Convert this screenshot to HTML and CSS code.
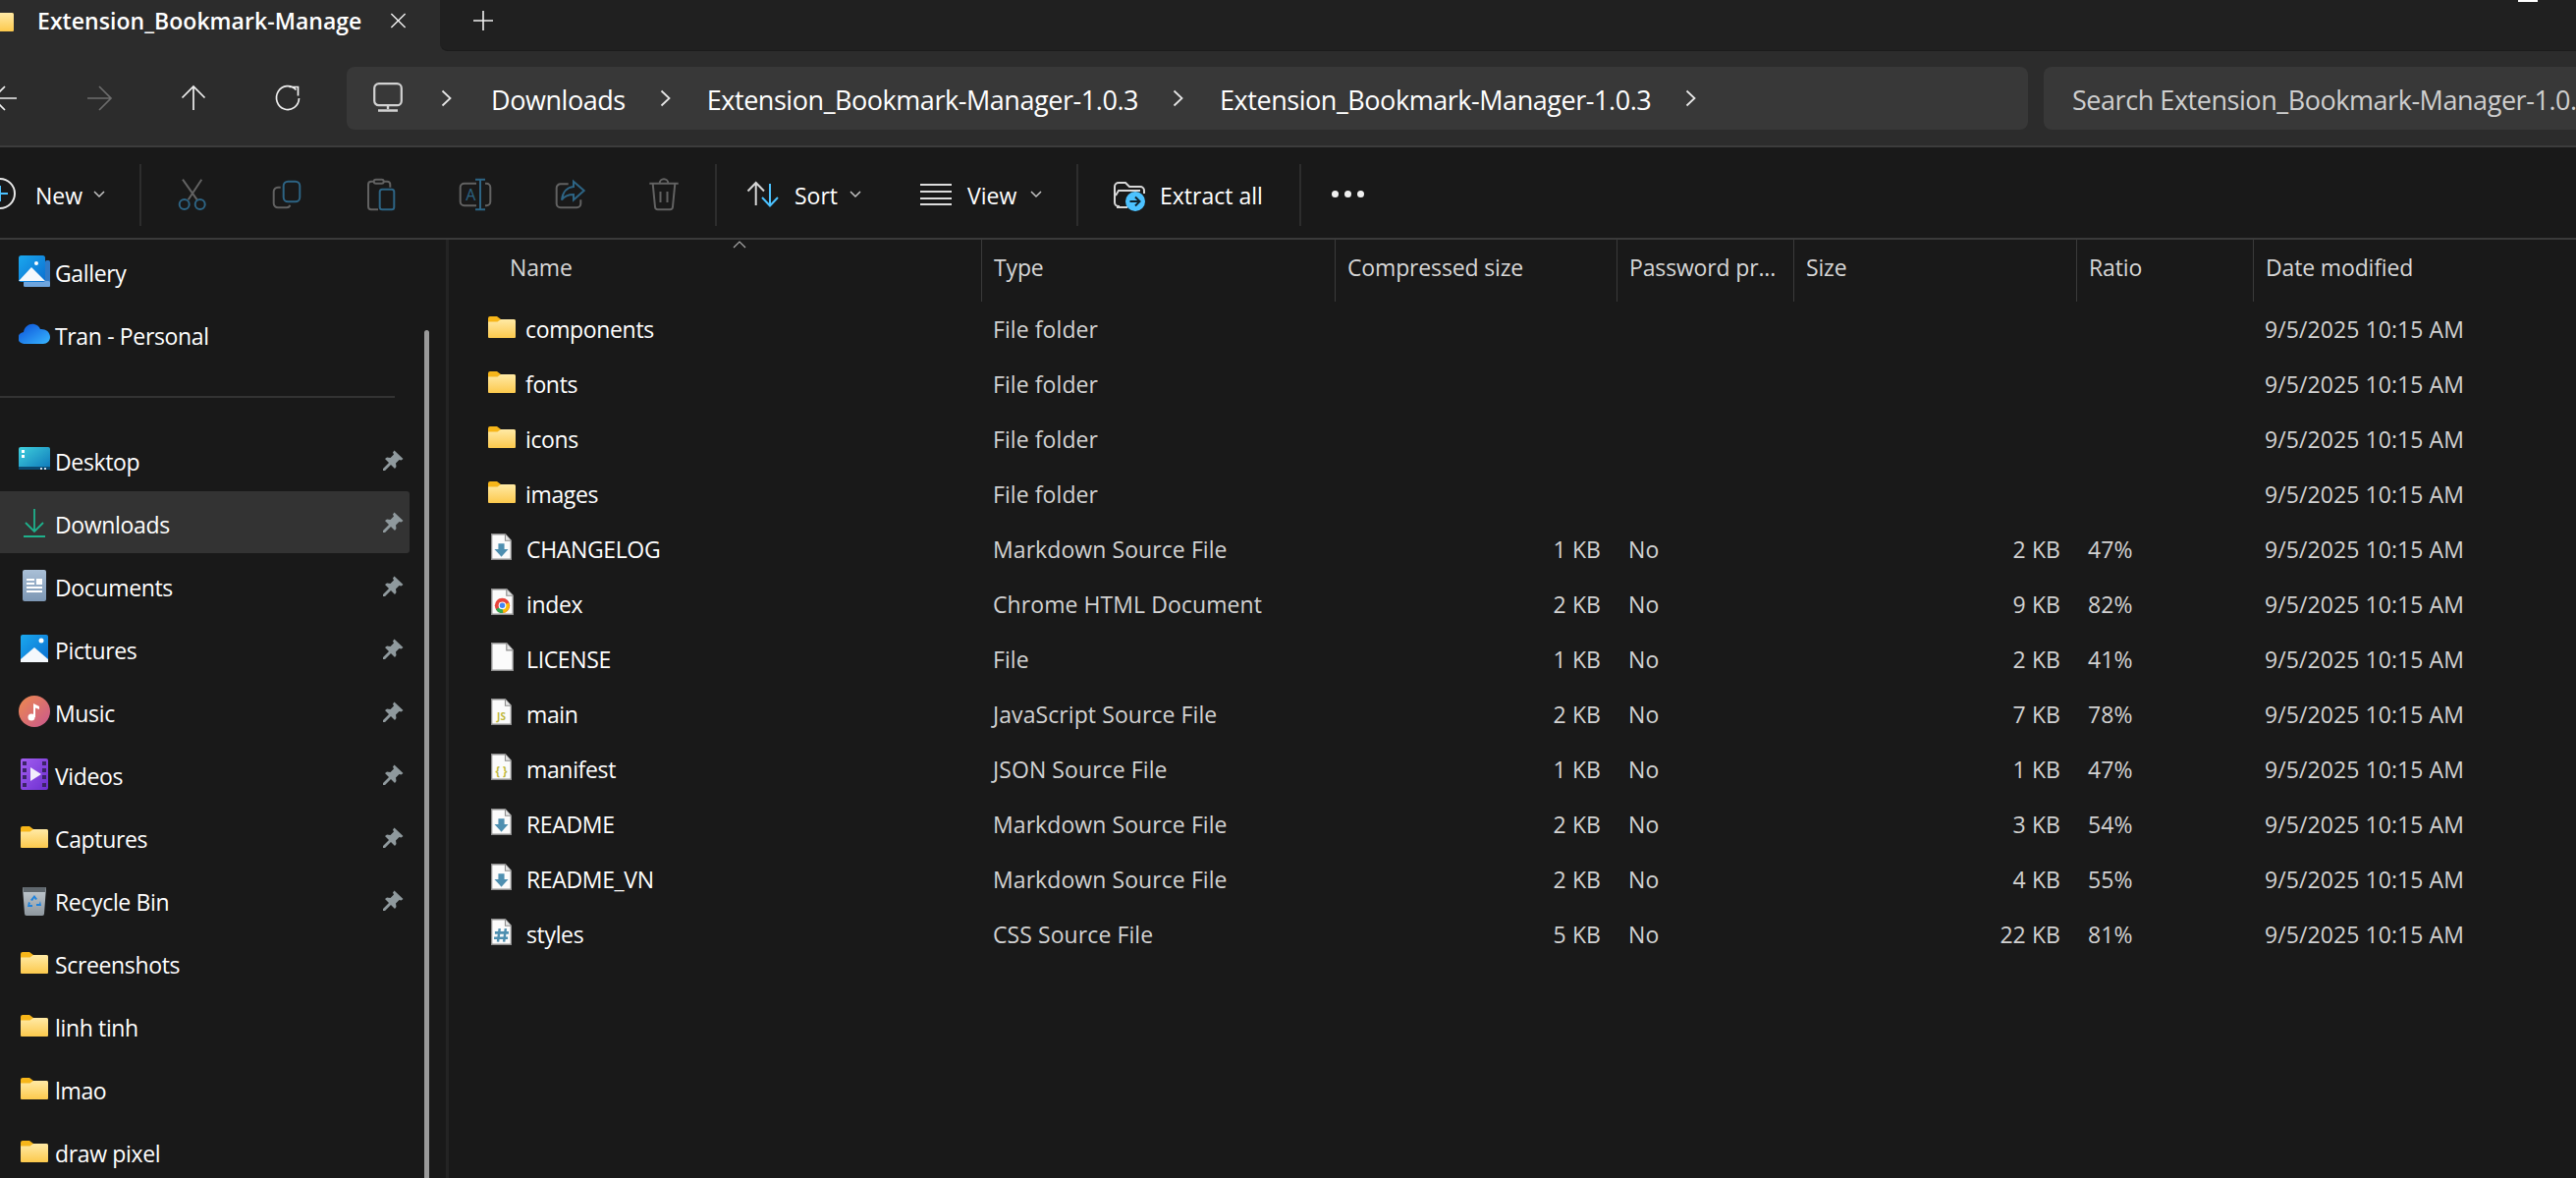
FILE: index.html
```html
<!DOCTYPE html>
<html lang="en">
<head>
<meta charset="utf-8">
<title>Extension_Bookmark-Manager-1.0.3</title>
<link rel="stylesheet" href="styles.css">
</head>
<body>
<svg class="defs" width="0" height="0" aria-hidden="true">
  <defs>
    <linearGradient id="fg" x1="0" y1="0" x2="0" y2="1"><stop offset="0" stop-color="#ffeaa6"/><stop offset="1" stop-color="#fcc94c"/></linearGradient>
    <linearGradient id="bl" x1="0" y1="0" x2="1" y2="1"><stop offset="0" stop-color="#1aa7ee"/><stop offset="1" stop-color="#0b6fd0"/></linearGradient>
    <linearGradient id="dt" x1="0" y1="0" x2="1" y2="1"><stop offset="0" stop-color="#3fd0dc"/><stop offset="1" stop-color="#0d76ba"/></linearGradient>
    <linearGradient id="dc" x1="0" y1="0" x2="0" y2="1"><stop offset="0" stop-color="#a9bfd6"/><stop offset="1" stop-color="#7d97b4"/></linearGradient>
    <linearGradient id="mu" x1="0" y1="0" x2="1" y2="1"><stop offset="0" stop-color="#ee8a4e"/><stop offset="1" stop-color="#c9588e"/></linearGradient>
    <linearGradient id="vd" x1="0" y1="0" x2="1" y2="1"><stop offset="0" stop-color="#a25ef0"/><stop offset="1" stop-color="#6d2fd0"/></linearGradient>
    <linearGradient id="cl" x1="0" y1="0" x2="1" y2="1"><stop offset="0" stop-color="#0a4fd8"/><stop offset="1" stop-color="#38b6ff"/></linearGradient>
    <linearGradient id="bn" x1="0" y1="0" x2="0" y2="1"><stop offset="0" stop-color="#c4ccd2"/><stop offset="1" stop-color="#8e979e"/></linearGradient>
    <symbol id="folder" viewBox="0 0 28 22">
      <path d="M0 2a2 2 0 0 1 2-2h7l4 3h13a2 2 0 0 1 2 2v6H0z" fill="#f7b619"/>
      <path d="M0 5.500h9.500L13 3h13a2 2 0 0 1 2 2v16a1 1 0 0 1-1 1H1a1 1 0 0 1-1-1z" fill="url(#fg)"/>
    </symbol>
    <symbol id="pin" viewBox="0 0 22 22">
      <path d="M12.500 0.500L21.500 9l-2 1.500-2-.5-3.500 3.500.5 3.500-1.500 2-4-4L3 21H1v-2l6-6-4-4 2-1.500 3.500.5L12 4.500 11 2.500z" fill="#8f999d"/>
    </symbol>
    <symbol id="doc" viewBox="0 0 24 28" preserveAspectRatio="none">
      <path d="M.75.75H16.500L23.250 7.500V27.250H.75z" fill="#fbfbfb" stroke="#8d8d8d" stroke-width="1.500"/>
      <path d="M16.500.75V7.500H23.250" fill="#e4e4e4" stroke="#8d8d8d" stroke-width="1.200"/>
    </symbol>
    <symbol id="md" viewBox="0 0 24 28" preserveAspectRatio="none">
      <use href="#doc" width="24" height="28"/>
      <path d="M8.500 10.500h7v6h4.500l-8 8-8-8h4.500z" fill="#4e8fb0"/>
    </symbol>
    <symbol id="chevron" viewBox="0 0 12 24">
      <path d="M1.500 4.500l8 7.500-8 7.500" fill="none" stroke="#e6e6e6" stroke-width="1.800"/>
    </symbol>
    <symbol id="caret" viewBox="0 0 12 8">
      <path d="M1 1l5 5 5-5" fill="none" stroke="#c4c4c4" stroke-width="1.500"/>
    </symbol>
  </defs>
</svg>

<header class="tabbar">
  <div class="tab">
    <svg class="tab-folder"><use href="#folder"/></svg>
    <span class="tab-title">Extension_Bookmark-Manage</span>
    <svg class="tab-close" viewBox="0 0 18 18"><path d="M1 1l16 16M17 1L1 17" stroke="#f0f0f0" stroke-width="1.600"/></svg>
  </div>
  <div class="tabrest">
    <svg class="tab-plus" viewBox="0 0 20 20"><path d="M10 0v20M0 10h20" stroke="#f0f0f0" stroke-width="1.600"/></svg>
    <i class="corner-mark"></i>
  </div>
</header>

<nav class="navbar">
  <svg class="nav-ic nav-back" viewBox="0 0 40 40"><path d="M32 20H8M20 8L8 20l12 12" fill="none" stroke="#f0f0f0" stroke-width="1.700"/></svg>
  <svg class="nav-ic" viewBox="0 0 40 40"><path d="M8 20h24M20 8l12 12-12 12" fill="none" stroke="#6c6c6c" stroke-width="1.700"/></svg>
  <svg class="nav-ic" viewBox="0 0 40 40"><path d="M20 32V8M8.500 19.500L20 8l11.500 11.500" fill="none" stroke="#f0f0f0" stroke-width="1.700"/></svg>
  <svg class="nav-ic nav-refresh" viewBox="0 0 40 40"><path d="M28.500 11.500A11.500 12 0 1 0 31.500 20M21.500 8.500h9v9" fill="none" stroke="#f0f0f0" stroke-width="1.700"/></svg>
  <div class="address">
    <svg class="monitor" viewBox="0 0 30 30"><rect x="1.200" y="1.200" width="27.600" height="22" rx="4.500" fill="none" stroke="#d2d2d2" stroke-width="2.200"/><path d="M15 24v3M5 28.500h20" stroke="#d2d2d2" stroke-width="2.400"/></svg>
    <svg class="crumb-chev"><use href="#chevron"/></svg>
    <span class="crumb crumb-first">Downloads</span>
    <svg class="crumb-chev"><use href="#chevron"/></svg>
    <span class="crumb">Extension_Bookmark-Manager-1.0.3</span>
    <svg class="crumb-chev"><use href="#chevron"/></svg>
    <span class="crumb">Extension_Bookmark-Manager-1.0.3</span>
    <svg class="crumb-chev"><use href="#chevron"/></svg>
  </div>
  <div class="search"><span class="search-text">Search Extension_Bookmark-Manager-1.0.3</span></div>
</nav>

<section class="toolbar">
  <svg class="tb-new" viewBox="0 0 32 32"><circle cx="16" cy="16" r="15" fill="none" stroke="#e8e8e8" stroke-width="2"/><path d="M16 8v16M8 16h16" stroke="#4cc2ff" stroke-width="2"/></svg>
  <span class="tb-label tb-new-label">New</span>
  <svg class="tb-caret tb-new-caret"><use href="#caret"/></svg>
  <i class="tb-div tb-div-a"></i>
  <button class="tb-btn" aria-label="Cut"><svg viewBox="0 0 48 48" class="tb-ic"><path d="M14 9.700L28.700 30.300M33.300 9.700L19.700 30.300" fill="none" stroke="#626262" stroke-width="2"/><circle cx="15.700" cy="35" r="5" fill="none" stroke="#2d6484" stroke-width="2"/><circle cx="31.700" cy="35" r="5" fill="none" stroke="#2d6484" stroke-width="2"/></svg></button>
  <button class="tb-btn" aria-label="Copy"><svg viewBox="0 0 48 48" class="tb-ic"><path d="M17.700 17.700H15a4.300 4.300 0 0 0-4.300 4.300V34a4.300 4.300 0 0 0 4.300 4.300h9a3.500 3.500 0 0 0 3.300-2.500" fill="none" stroke="#626262" stroke-width="2"/><rect x="20.700" y="11.700" width="16.600" height="20.600" rx="4.500" fill="none" stroke="#2d6484" stroke-width="2"/></svg></button>
  <button class="tb-btn" aria-label="Paste"><svg viewBox="0 0 48 48" class="tb-ic"><path d="M16.700 11.700H14a3 3 0 0 0-3 3V37.300a3 3 0 0 0 3 3h7M26.700 11.700H30.300a3 3 0 0 1 3 3v3" fill="none" stroke="#626262" stroke-width="2"/><rect x="16.700" y="9.700" width="10" height="4" rx="2" fill="none" stroke="#626262" stroke-width="2"/><rect x="22.700" y="19.700" width="14.600" height="20.600" rx="2.500" fill="none" stroke="#2d6484" stroke-width="2"/></svg></button>
  <button class="tb-btn" aria-label="Rename"><svg viewBox="0 0 48 48" class="tb-ic"><path d="M25 13.700H12.700a4 4 0 0 0-4 4V32.300a4 4 0 0 0 4 4H25M34 13.700h1.300a4 4 0 0 1 4 4V32.300a4 4 0 0 1-4 4H34" fill="none" stroke="#626262" stroke-width="2"/><path d="M29 9.700V40.300M24 9.700h10M24 40.300h10" fill="none" stroke="#2d6484" stroke-width="2"/><text class="ic-a" x="19.300" y="31" text-anchor="middle">A</text></svg></button>
  <button class="tb-btn" aria-label="Share"><svg viewBox="0 0 48 48" class="tb-ic"><path d="M22.700 14.300H14.700a4 4 0 0 0-4 4V34.300a4 4 0 0 0 4 4H31.300a4 4 0 0 0 4-4V30.300" fill="none" stroke="#626262" stroke-width="2"/><path d="M28 11.700L38.700 21L28 30.500V25C22 25 18.500 27 16 30.500C17 22 22 17.500 28 17Z" fill="none" stroke="#2d6484" stroke-width="2"/></svg></button>
  <button class="tb-btn" aria-label="Delete"><svg viewBox="0 0 48 48" class="tb-ic"><path d="M9.300 13.700H38.700M12.700 14l2.300 23.500a3 3 0 0 0 3 2.800h12a3 3 0 0 0 3-2.800L35.300 14M19.700 13.500a4.300 4.300 0 0 1 8.600 0M20.500 22v11M27.500 22v11" fill="none" stroke="#626262" stroke-width="2"/></svg></button>
  <i class="tb-div tb-div-b"></i>
  <svg class="tb-sort" viewBox="0 0 36 40"><path d="M10.700 10V33M2.500 18.500L10.700 10L19 18.500" fill="none" stroke="#d6d6d6" stroke-width="2"/><path d="M25 11V33.500M17 25L25 33.500L33 25" fill="none" stroke="#4cc2ff" stroke-width="2"/></svg>
  <span class="tb-label tb-sort-label">Sort</span>
  <svg class="tb-caret tb-sort-caret"><use href="#caret"/></svg>
  <svg class="tb-view" viewBox="0 0 32 24"><path d="M0 2h32M0 9h32M0 16h32M0 22h32" stroke="#dcdcdc" stroke-width="2"/></svg>
  <span class="tb-label tb-view-label">View</span>
  <svg class="tb-caret tb-view-caret"><use href="#caret"/></svg>
  <i class="tb-div tb-div-c"></i>
  <svg class="tb-extract" viewBox="0 0 34 32"><path d="M7 26H6a4 4 0 0 1-4-4V6a4 4 0 0 1 4-4h7l4 4h11a4 4 0 0 1 4 4v3M3 15l3-5h22" fill="none" stroke="#d8d8d8" stroke-width="2"/><path d="M4 27h11" stroke="#d8d8d8" stroke-width="2"/><circle cx="23" cy="21" r="10" fill="#4cc2ff"/><path d="M17.500 21h10M23 16.500l4.500 4.500-4.500 4.500" fill="none" stroke="#10222c" stroke-width="2"/></svg>
  <span class="tb-label tb-extract-label">Extract all</span>
  <i class="tb-div tb-div-d"></i>
  <span class="tb-dots"><i></i><i></i><i></i></span>
</section>

<div class="main">
  <aside class="sidebar">
    <div class="navrow"><svg class="nav-icon" viewBox="0 0 32 32"><rect x="27" y="5" width="5" height="27" rx="1.500" fill="#2f79c6"/><rect x="5" y="26" width="27" height="6" rx="1.500" fill="#6ea5de"/><rect x="0" y="0" width="27" height="27" rx="2.500" fill="url(#bl)"/><path d="M0 26L13 12l14 14z" fill="#f4f8fc"/><circle cx="18" cy="8" r="2" fill="#fff"/></svg><span>Gallery</span></div>
    <div class="navrow"><svg class="nav-icon" viewBox="0 0 32 32"><path d="M6 26a6 6 0 0 1-1-12c1-6 6-9 11-8 3 .7 5 2.500 6 5 5-.5 10 2.500 10 8 0 4-3 7-7 7z" fill="url(#cl)"/></svg><span>Tran - Personal</span></div>
    <div class="navsep"><i></i></div>
    <div class="navrow"><svg class="nav-icon" viewBox="0 0 32 32"><rect y="3" width="32" height="23" rx="2" fill="url(#dt)"/><rect y="23" width="32" height="3" fill="#0b4a72"/><rect x="3" y="6" width="3" height="3" fill="#fff"/><rect x="3" y="11" width="3" height="3" fill="#fff"/><rect x="22" y="24" width="2" height="2" fill="#cde"/><rect x="26" y="24" width="2" height="2" fill="#cde"/></svg><span>Desktop</span><svg class="pin"><use href="#pin"/></svg></div>
    <div class="navrow navrow-on"><svg class="nav-icon" viewBox="0 0 32 32"><path d="M16 2v23M7 16l9 9 9-9M5 30h22" fill="none" stroke="#1eb18c" stroke-width="1.800"/></svg><span>Downloads</span><svg class="pin"><use href="#pin"/></svg></div>
    <div class="navrow"><svg class="nav-icon" viewBox="0 0 32 32"><rect x="4" width="24" height="32" rx="2" fill="url(#dc)"/><path d="M8 10h8M8 14h8M8 18h16M8 22h16" stroke="#fff" stroke-width="2"/><rect x="18" y="9" width="6" height="6" fill="#fff"/></svg><span>Documents</span><svg class="pin"><use href="#pin"/></svg></div>
    <div class="navrow"><svg class="nav-icon" viewBox="0 0 32 32"><rect x="2" y="2" width="28" height="28" rx="2" fill="url(#bl)"/><path d="M2 30v-3L16 15l14 12v3z" fill="#f4f8fc"/><circle cx="23" cy="8" r="2.500" fill="#fff"/></svg><span>Pictures</span><svg class="pin"><use href="#pin"/></svg></div>
    <div class="navrow"><svg class="nav-icon" viewBox="0 0 32 32"><circle cx="16" cy="16" r="16" fill="url(#mu)"/><circle cx="13" cy="22" r="3.500" fill="#fff"/><path d="M15 22V8l6 3v3l-4-1.500V22z" fill="#fff"/></svg><span>Music</span><svg class="pin"><use href="#pin"/></svg></div>
    <div class="navrow"><svg class="nav-icon" viewBox="0 0 32 32"><rect x="2" width="28" height="32" rx="2" fill="url(#vd)"/><path d="M4 3h4v4H4zM4 10h4v4H4zM4 17h4v4H4zM4 25h4v4H4zM24 3h4v4h-4zM24 10h4v4h-4zM24 17h4v4h-4zM24 25h4v4h-4z" fill="#3c2368"/><path d="M12 9l11 7-11 7z" fill="#f3eefc"/></svg><span>Videos</span><svg class="pin"><use href="#pin"/></svg></div>
    <div class="navrow"><svg class="nav-folder"><use href="#folder"/></svg><span>Captures</span><svg class="pin"><use href="#pin"/></svg></div>
    <div class="navrow"><svg class="nav-icon" viewBox="0 0 32 32"><path d="M4 3h24l-2 27a2 2 0 0 1-2 2H8a2 2 0 0 1-2-2z" fill="url(#bn)"/><path d="M4 3h24l-1 5H5z" fill="#60686e"/><path d="M16 11l3 4-2 1-1-2-2 3-2-1zM22 17l1 5h-5v-2h3zM10 18l2 1-1 2h3v2H9z" fill="#1f83dd"/></svg><span>Recycle Bin</span><svg class="pin"><use href="#pin"/></svg></div>
    <div class="navrow"><svg class="nav-folder"><use href="#folder"/></svg><span>Screenshots</span></div>
    <div class="navrow"><svg class="nav-folder"><use href="#folder"/></svg><span>linh tinh</span></div>
    <div class="navrow"><svg class="nav-folder"><use href="#folder"/></svg><span>lmao</span></div>
    <div class="navrow"><svg class="nav-folder"><use href="#folder"/></svg><span>draw pixel</span></div>
    <i class="scrollthumb"></i>
  </aside>

  <section class="files">
    <div class="cols head">
      <div class="hc hc-name">Name<svg class="sort-caret" viewBox="0 0 14 8"><path d="M1 7l6-6 6 6" fill="none" stroke="#a8a8a8" stroke-width="1.200"/></svg></div>
      <div class="hc">Type</div><div class="hc">Compressed size</div><div class="hc">Password pr...</div><div class="hc">Size</div><div class="hc">Ratio</div><div class="hc">Date modified</div>
    </div>
    <div class="cols row"><div class="name"><svg class="f-folder"><use href="#folder"/></svg>components</div><div>File folder</div><div></div><div></div><div></div><div></div><div>9/5/2025 10:15 AM</div></div>
    <div class="cols row"><div class="name"><svg class="f-folder"><use href="#folder"/></svg>fonts</div><div>File folder</div><div></div><div></div><div></div><div></div><div>9/5/2025 10:15 AM</div></div>
    <div class="cols row"><div class="name"><svg class="f-folder"><use href="#folder"/></svg>icons</div><div>File folder</div><div></div><div></div><div></div><div></div><div>9/5/2025 10:15 AM</div></div>
    <div class="cols row"><div class="name"><svg class="f-folder"><use href="#folder"/></svg>images</div><div>File folder</div><div></div><div></div><div></div><div></div><div>9/5/2025 10:15 AM</div></div>
    <div class="cols row"><div class="name"><svg class="f-doc" preserveAspectRatio="none"><use href="#md"/></svg>CHANGELOG</div><div>Markdown Source File</div><div class="num">1 KB</div><div>No</div><div class="num">2 KB</div><div>47%</div><div>9/5/2025 10:15 AM</div></div>
    <div class="cols row"><div class="name"><svg class="f-doc f-doc-l" viewBox="0 0 24 28"><use href="#doc" width="24" height="28"/><circle cx="12" cy="18" r="8" fill="#e8453c"/><path d="M12 18L5 22a8 8 0 0 0 8 4z" fill="#34a853"/><path d="M12 18l7-3a8 8 0 0 1-6 11z" fill="#fbbc05"/><circle cx="12" cy="18" r="3.500" fill="#4285f4" stroke="#fff" stroke-width="1.200"/></svg>index</div><div>Chrome HTML Document</div><div class="num">2 KB</div><div>No</div><div class="num">9 KB</div><div>82%</div><div>9/5/2025 10:15 AM</div></div>
    <div class="cols row"><div class="name"><svg class="f-doc f-doc-l" preserveAspectRatio="none"><use href="#doc"/></svg>LICENSE</div><div>File</div><div class="num">1 KB</div><div>No</div><div class="num">2 KB</div><div>41%</div><div>9/5/2025 10:15 AM</div></div>
    <div class="cols row"><div class="name"><svg class="f-doc" viewBox="0 0 24 28" preserveAspectRatio="none"><use href="#doc" width="24" height="28"/><text class="ic-js" x="12" y="23">JS</text></svg>main</div><div>JavaScript Source File</div><div class="num">2 KB</div><div>No</div><div class="num">7 KB</div><div>78%</div><div>9/5/2025 10:15 AM</div></div>
    <div class="cols row"><div class="name"><svg class="f-doc" viewBox="0 0 24 28" preserveAspectRatio="none"><use href="#doc" width="24" height="28"/><text class="ic-js ic-json" x="12" y="22.500">{ }</text></svg>manifest</div><div>JSON Source File</div><div class="num">1 KB</div><div>No</div><div class="num">1 KB</div><div>47%</div><div>9/5/2025 10:15 AM</div></div>
    <div class="cols row"><div class="name"><svg class="f-doc" preserveAspectRatio="none"><use href="#md"/></svg>README</div><div>Markdown Source File</div><div class="num">2 KB</div><div>No</div><div class="num">3 KB</div><div>54%</div><div>9/5/2025 10:15 AM</div></div>
    <div class="cols row"><div class="name"><svg class="f-doc" preserveAspectRatio="none"><use href="#md"/></svg>README_VN</div><div>Markdown Source File</div><div class="num">2 KB</div><div>No</div><div class="num">4 KB</div><div>55%</div><div>9/5/2025 10:15 AM</div></div>
    <div class="cols row"><div class="name"><svg class="f-doc" viewBox="0 0 24 28" preserveAspectRatio="none"><use href="#doc" width="24" height="28"/><path d="M10 10.500l-2 14M17 10.500l-2 14M4.500 15h16M3.500 20.500h16" fill="none" stroke="#4e8fb0" stroke-width="2.800"/></svg>styles</div><div>CSS Source File</div><div class="num">5 KB</div><div>No</div><div class="num">22 KB</div><div>81%</div><div>9/5/2025 10:15 AM</div></div>
  </section>
</div>
</body>
</html>
```

FILE: styles.css
```css
* { box-sizing: border-box; }
html, body { height: 100%; }
body {
  margin: 0;
  overflow: hidden;
  background: #191919;
  color: #fff;
  font-family: "Open Sans", "Noto Sans", "Liberation Sans", sans-serif;
  font-size: 23px;
  letter-spacing: -0.35px;
  display: flex;
  flex-direction: column;
}
svg { display: block; flex: none; }
.defs { position: absolute; }
i { display: block; }

/* tab strip */
.tabbar { display: flex; height: 52px; flex: none; background: #2c2c2c; }
.tab { display: flex; align-items: center; width: 448px; height: 42px; flex: none; }
.tab-folder { width: 28px; height: 22px; margin-left: -14px; }
.tab-title {
  width: 327px;
  margin-left: 24px;
  white-space: nowrap;
  font-weight: 600;
  letter-spacing: 0.05px;
}
.tab-close { width: 17px; height: 16px; margin-left: 32px; }
.tabrest {
  position: relative;
  flex: 1;
  display: flex;
  align-items: flex-start;
  background: #202020;
  border-bottom: 1px solid #1b1b1b;
  border-bottom-left-radius: 8px;
}
.tab-plus { width: 20px; height: 20px; margin: 11px 0 0 34px; }
.corner-mark { position: absolute; top: 0; left: 2116px; width: 20px; height: 2px; background: #fff; }

/* navigation bar */
.navbar {
  display: flex;
  align-items: center;
  height: 98px;
  flex: none;
  background: #2c2c2c;
  border-bottom: 2px solid #3c3c3c;
}
.nav-ic { width: 40px; height: 40px; margin-right: 56px; }
.nav-back { margin-left: -15px; }
.nav-refresh { margin-right: 40px; }
.address {
  display: flex;
  align-items: center;
  width: 1712px;
  height: 64px;
  padding-left: 27px;
  background: #383838;
  border-radius: 8px;
  font-size: 27px;
  letter-spacing: -0.45px;
  white-space: nowrap;
}
.monitor { width: 30px; height: 30px; margin: -3px 39px 0 0; }
.crumb-chev { width: 12px; height: 24px; }
.crumb { margin: 0 35px 0 36px; padding-top: 2px; }
.crumb-first { margin-left: 39px; }
.search {
  flex: 1;
  min-width: 0;
  height: 64px;
  margin-left: 16px;
  padding-left: 29px;
  display: flex;
  align-items: center;
  overflow: hidden;
  background: #383838;
  border-radius: 8px 0 0 8px;
  color: #cfcfcf;
  font-size: 27px;
  letter-spacing: -0.45px;
  white-space: nowrap;
}
.search-text { padding-top: 2px; }

/* command bar */
.toolbar {
  display: flex;
  align-items: center;
  height: 94px;
  flex: none;
  padding-top: 4px;
  border-bottom: 2px solid #3a3a3a;
  background: #191919;
}
.tb-label { white-space: nowrap; padding-top: 2px; letter-spacing: 0; }
.tb-new { width: 32px; height: 32px; margin: -2px 0 0 -16px; }
.tb-new-label { margin-left: 20px; width: 48px; }
.tb-caret { width: 12px; height: 8px; }
.tb-new-caret { margin-left: 11px; }
.tb-div { width: 2px; height: 63px; background: #2d2d2d; }
.tb-div-a { margin-left: 35px; margin-right: 4px; }
.tb-btn { width: 96px; height: 56px; margin-top: -2px; padding: 4px 24px; border: 0; background: none; }
.tb-ic { width: 48px; height: 48px; }
.ic-a { font: 16px "Open Sans", sans-serif; fill: #2d6484; letter-spacing: 0; }
.ic-js { font: bold 11.5px "Open Sans", sans-serif; fill: #bfb83c; text-anchor: middle; letter-spacing: 0; }
.ic-json { font-size: 13px; }
.tb-div-b { margin-left: 4px; }
.tb-sort { width: 36px; height: 40px; margin: -4px 0 0 29px; }
.tb-sort-label { margin-left: 14px; width: 45px; }
.tb-sort-caret { margin-left: 11px; }
.tb-view { width: 32px; height: 24px; margin-left: 60px; }
.tb-view-label { margin-left: 16px; width: 52px; }
.tb-view-caret { margin-left: 12px; }
.tb-div-c { margin-left: 35px; }
.tb-extract { width: 34px; height: 32px; margin: 3px 0 0 35px; }
.tb-extract-label { margin-left: 14px; width: 104px; }
.tb-div-d { margin-left: 38px; }
.tb-dots { display: flex; gap: 6px; margin-left: 31px; margin-top: -2px; }
.tb-dots i { width: 7px; height: 7px; border-radius: 50%; background: #f0f0f0; }

/* body */
.main { display: flex; flex: 1; min-height: 0; }
.sidebar {
  position: relative;
  width: 457px;
  flex: none;
  padding: 0 37px 0 0;
  overflow: hidden;
  border-right: 3px solid #242424;
}
.navrow { display: flex; align-items: center; height: 64px; padding-right: 6px; white-space: nowrap; border-radius: 0 3px 3px 0; }
.navrow > span { padding-top: 4px; }
.navrow-on { background: #333; height: 63px; margin-bottom: 1px; }
.nav-icon { width: 32px; height: 32px; margin: 0 5px 0 19px; }
.nav-folder { width: 28px; height: 22px; margin: 0 7px 0 21px; }
.pin { width: 22px; height: 22px; margin: 1px 0 0 auto; }
.navsep { height: 64px; padding-top: 31px; }
.navsep i { width: 402px; height: 2px; background: #333; }
.scrollthumb { position: absolute; top: 92px; bottom: 0; left: 432px; width: 5px; background: #9a9a9a; border-radius: 3px 3px 0 0; }

.files { flex: 1; min-width: 0; }
.cols { display: grid; grid-template-columns: 542px 360px 287px 180px 288px 180px 1fr; }
.head { height: 63px; color: #d6d6d6; letter-spacing: -0.15px; }
.hc { display: flex; align-items: center; padding: 0 0 8px 12px; border-left: 1px solid #3a3a3a; white-space: nowrap; position: relative; }
.hc-name { border-left: 0; padding-left: 62px; }
.sort-caret { position: absolute; top: 1px; left: 289px; width: 14px; height: 8px; }
.row { height: 56px; align-items: center; color: #d2d2d2; white-space: nowrap; letter-spacing: 0.08px; }
.row > div { padding-left: 12px; }
.row > .num { padding: 0 16px 0 0; text-align: right; }
.row > .name { display: flex; align-items: center; padding-left: 40px; color: #fff; letter-spacing: -0.35px; }
.f-folder { width: 28px; height: 22px; margin-right: 10px; margin-top: -4px; }
.f-doc { width: 21px; height: 27px; margin: -5px 15px 0 3px; }
.f-doc-l { width: 23px; height: 29px; margin: -6px 13px 0 3px; }
```
